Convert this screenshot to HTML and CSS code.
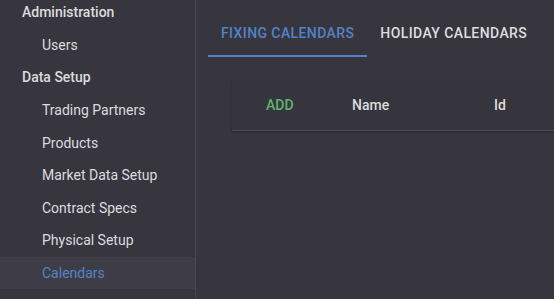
FILE: index.html
```html
<!DOCTYPE html>
<html lang="en">
<head>
    <meta charset="UTF-8">
    <title>Calendars</title>
    <link rel="stylesheet" href="styles.css">
</head>
<body>

<div class="app">
    <nav class="sidebar">
        <div class="nav-group">Administration</div>
        <div class="nav-item">Users</div>
        <div class="nav-group">Data Setup</div>
        <div class="nav-item">Trading Partners</div>
        <div class="nav-item">Products</div>
        <div class="nav-item">Market Data Setup</div>
        <div class="nav-item">Contract Specs</div>
        <div class="nav-item">Physical Setup</div>
        <div class="nav-item active">Calendars</div>
    </nav>

    <main class="content">
        <div class="tabs">
            <div class="tab selected">Fixing Calendars</div>
            <div class="tab">Holiday Calendars</div>
        </div>

        <div class="grid">
            <div class="grid-header">
                <div class="col col-add">ADD</div>
                <div class="col col-name">Name</div>
                <div class="col col-id">Id</div>
            </div>
        </div>
    </main>
</div>

</body>
</html>
```

FILE: styles.css
```css
body {
    margin: 0;
    background: #37363f;
    color: #dcdcdc;
    font-family: Roboto, 'Liberation Sans', sans-serif;
    font-size: 14px;
    overflow: hidden;
}

.app {
    display: flex;
    height: 299px;
}

/* menu lateral */
.sidebar {
    width: 195px;
    flex-shrink: 0;
    border-right: 1px solid #4b4a53;
    margin-top: -4px;
}

.nav-group,
.nav-item {
    height: 32.6px;
    display: flex;
    align-items: center;
    font-weight: 500;
}

.nav-group {
    padding-left: 22px;
}

.nav-item {
    padding-left: 42px;
    font-weight: 400;
}

.nav-item.active {
    background: #3e3d47;
    color: #5283c6;
}

/* contenido */
.content {
    flex: 1;
    padding-left: 12px;
    overflow: hidden;
}

.tabs {
    display: flex;
    margin-top: 10px;
}

.tab {
    height: 45px;
    padding: 0 13px;
    display: flex;
    align-items: center;
    text-transform: uppercase;
    font-weight: 500;
    letter-spacing: 0.4px;
    color: #dedede;
    border-bottom: 2px solid transparent;
}

.tab.selected {
    color: #5283c6;
    border-bottom-color: #5283c6;
}

.grid {
    margin: 23px 0 0 24px;
}

.grid-header {
    height: 50px;
    display: flex;
    align-items: center;
    background: #36353e;
    border-bottom: 1px solid #4d4c55;
    box-shadow: 0 1px 2px rgba(0, 0, 0, 0.35);
    font-weight: 500;
}

.col-add {
    width: 120px;
    padding-left: 34px;
    box-sizing: border-box;
    color: #5fb46f;
}

.col-name {
    width: 142px;
}

.col-add,
.col-name,
.col-id {
    flex-shrink: 0;
}
```
